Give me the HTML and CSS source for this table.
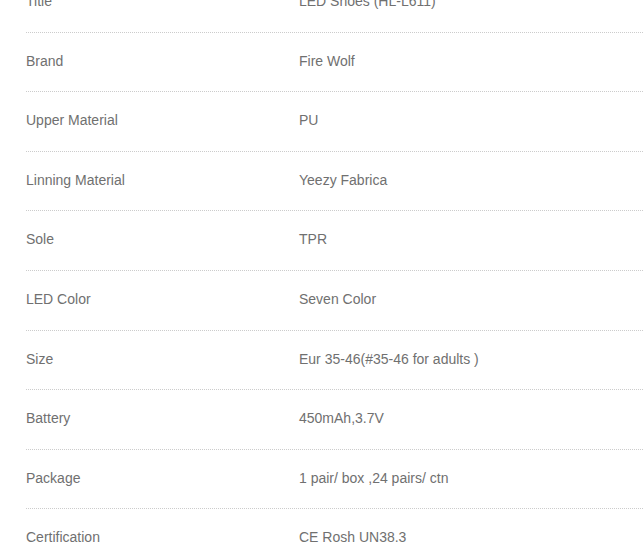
FILE: index.html
```html
<!DOCTYPE html>
<html>
<head>
<meta charset="utf-8">
<link rel="stylesheet" href="styles.css">
</head>
<body>
<div class="specs">
  <div class="row"><div class="label">Title</div><div class="value">LED Shoes (HL-L611)</div></div>
  <div class="row"><div class="label">Brand</div><div class="value">Fire Wolf</div></div>
  <div class="row"><div class="label">Upper Material</div><div class="value">PU</div></div>
  <div class="row"><div class="label">Linning Material</div><div class="value">Yeezy Fabrica</div></div>
  <div class="row"><div class="label">Sole</div><div class="value">TPR</div></div>
  <div class="row"><div class="label">LED Color</div><div class="value">Seven Color</div></div>
  <div class="row"><div class="label">Size</div><div class="value">Eur 35-46(#35-46 for adults )</div></div>
  <div class="row"><div class="label">Battery</div><div class="value">450mAh,3.7V</div></div>
  <div class="row"><div class="label">Package</div><div class="value">1 pair/ box ,24 pairs/ ctn</div></div>
  <div class="row"><div class="label">Certification</div><div class="value">CE Rosh UN38.3</div></div>
</div>
</body>
</html>
```
FILE: styles.css
```css
html, body {
  margin: 0;
  padding: 0;
  background: #fff;
  overflow: hidden;
}
.specs {
  margin: -27px 0 0 26px;
  font-family: "Liberation Sans", Arial, sans-serif;
  font-size: 14px;
  color: #707070;
}
.row {
  display: flex;
  padding: 19px 0 20px;
  line-height: 19.6px;
  border-bottom: 1px dotted #ccc;
}
.label {
  width: 273px;
  flex: none;
}
.value {
  flex: 1;
}
```
